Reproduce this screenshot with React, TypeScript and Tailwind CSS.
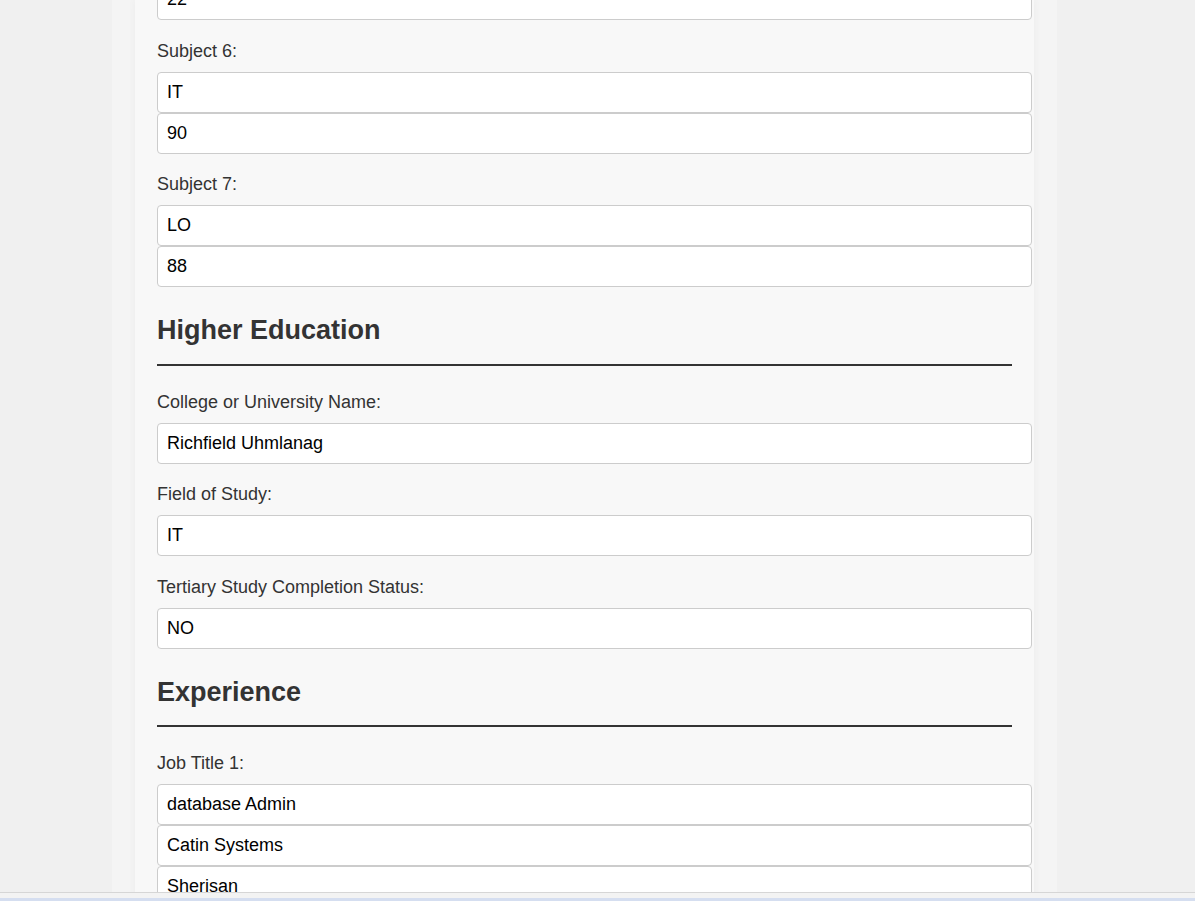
import React from "react";

type Field = { label?: string; values: string[] };

const Label = ({ text, first }: { text: string; first?: boolean }) => (
  <label
    className={`block text-[18px] leading-[21px] text-[#333] mb-[10px] ${
      first ? "mt-[26px]" : "mt-[20.5px]"
    }`}
  >
    {text}
  </label>
);

const Input = ({ value }: { value: string }) => (
  <input
    readOnly
    value={value}
    className="block box-border w-[875px] h-[41px] shrink-0 pl-[9px] pr-[9px] border border-[#ccc] rounded-[4px] bg-white text-[18px] text-black outline-none"
    style={{ fontFamily: "inherit" }}
  />
);

const Heading = ({ title }: { title: string }) => (
  <h2 className="mt-[28px] text-[27px] leading-[31px] font-bold text-[#333] pb-[17.5px] border-b-2 border-[#333]">
    {title}
  </h2>
);

const Group = ({ field, first }: { field: Field; first?: boolean }) => (
  <div className="flex flex-col">
    {field.label && <Label text={field.label} first={first} />}
    {field.values.map((v, i) => (
      <Input key={i} value={v} />
    ))}
  </div>
);

const subjects: Field[] = [
  { label: "Subject 6:", values: ["IT", "90"] },
  { label: "Subject 7:", values: ["LO", "88"] },
];

const higher: Field[] = [
  { label: "College or University Name:", values: ["Richfield Uhmlanag"] },
  { label: "Field of Study:", values: ["IT"] },
  { label: "Tertiary Study Completion Status:", values: ["NO"] },
];

const experience: Field[] = [
  {
    label: "Job Title 1:",
    values: ["database Admin", "Catin Systems", "Sherisan", "2020"],
  },
];

export default function App() {
  return (
    <div
      className="h-[901px] overflow-hidden bg-[#f0f0f0]"
      style={{ fontFamily: '"Liberation Sans", Arial, sans-serif' }}
    >
      <div className="ml-[112px] w-[945px] h-full bg-[#f4f4f4] px-[23px]">
        <div className="h-full bg-[#f8f8f8] shadow-[0_0_8px_rgba(0,0,0,0.04)] pl-[22px] pr-[23px]">
          <div className="flex flex-col w-[855px]">
            <div className="-mt-[21px]">
              <Input value="22" />
            </div>
            {subjects.map((f) => (
              <Group key={f.label} field={f} />
            ))}

            <Heading title="Higher Education" />
            {higher.map((f, i) => (
              <Group key={f.label} field={f} first={i === 0} />
            ))}

            <Heading title="Experience" />
            {experience.map((f, i) => (
              <Group key={f.label} field={f} first={i === 0} />
            ))}
          </div>
        </div>
      </div>

      {/* bottom window chrome */}
      <div className="fixed left-0 right-0 bottom-0 h-[9px] flex flex-col">
        <div className="h-px bg-[#d6d6d6]" />
        <div className="h-[5px] bg-[#f3f3f3]" />
        <div className="flex-1 bg-[#d5def0]" />
      </div>
    </div>
  );
}
